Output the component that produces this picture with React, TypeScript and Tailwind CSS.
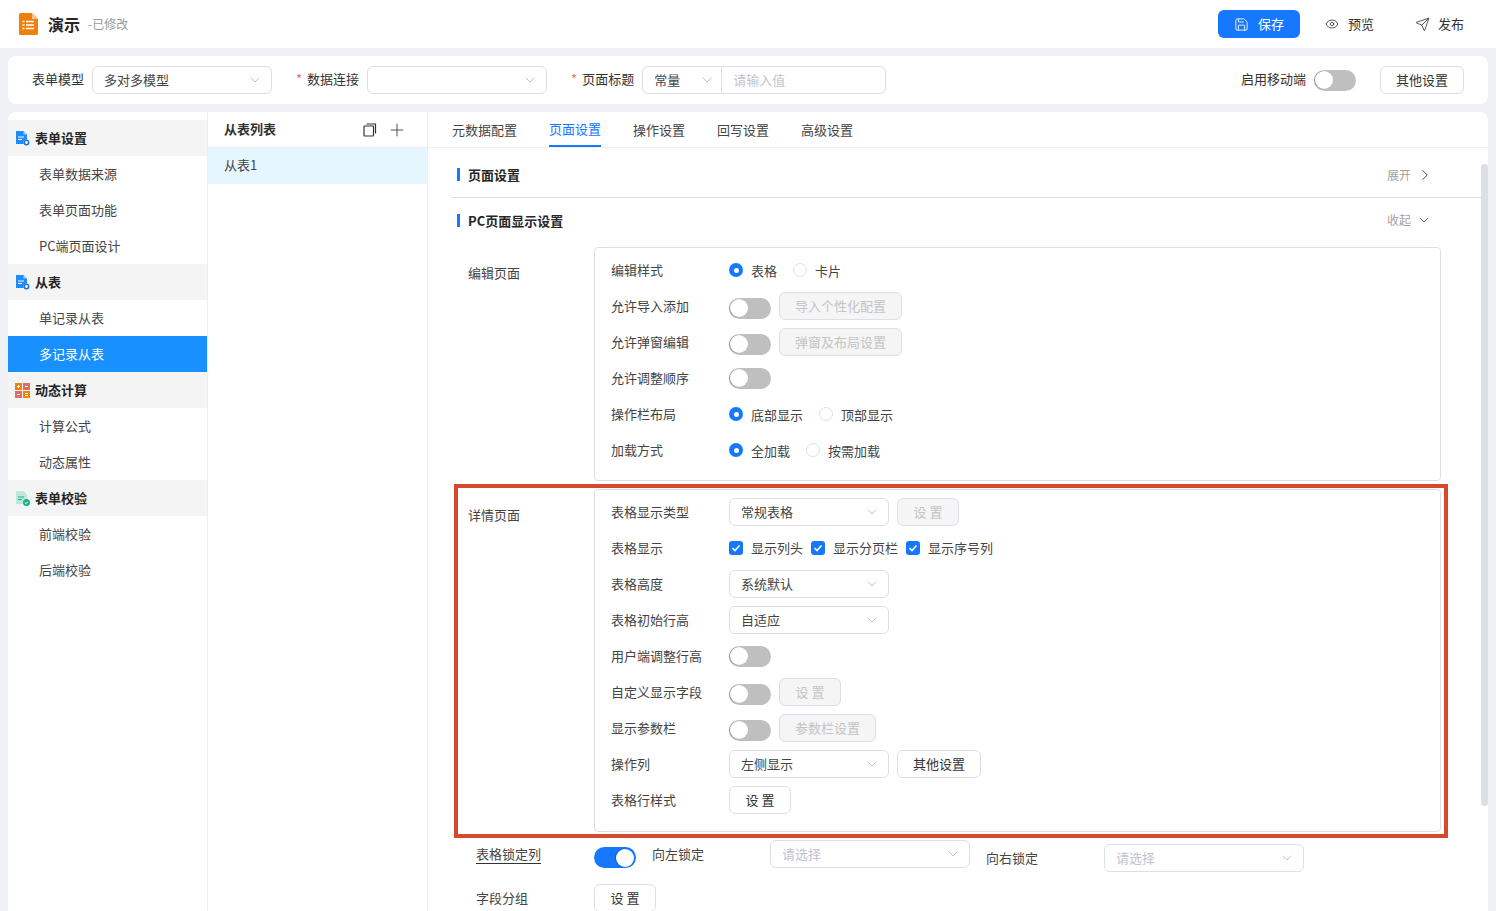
import React, {ReactNode} from 'react';
import {ChevronDown, ChevronRight, Eye, Plus, Save, Send} from 'lucide-react';

const fontStack = "font-['Noto_Sans_CJK_SC','Liberation_Sans',sans-serif]";

function DocIcon({color, badge}: {color: string; badge: string}) {
  return (
    <svg width="15" height="15" viewBox="0 0 15 15" className="shrink-0">
      <path d="M1 0h7.5L12 3.5V13H1z" fill={color} />
      <path d="M8.5 0L12 3.5H8.5z" fill="#ffffff" opacity="0.55" />
      <rect x="3" y="5.5" width="6" height="1" fill="#ffffff" />
      <rect x="3" y="8" width="4" height="1" fill="#ffffff" />
      <circle cx="11.5" cy="11.5" r="3" fill="#ffffff" />
      <circle cx="11.5" cy="11.5" r="2.2" fill="none" stroke={badge} strokeWidth="1.5" />
    </svg>
  );
}

function CalcIcon() {
  return (
    <svg width="15" height="15" viewBox="0 0 15 15" className="shrink-0">
      <rect width="7" height="7" fill="#f08300" />
      <rect x="8" width="7" height="7" fill="#de6b6b" />
      <rect y="8" width="7" height="7" fill="#de6b6b" />
      <rect x="8" y="8" width="7" height="7" fill="#f08300" />
      <path d="M2 3.5h3M3.5 2v3M10 3.5h3M2 11.5h3M10 10.5h3M10 12.5h3" stroke="#ffffff" strokeWidth="1" />
    </svg>
  );
}

function CheckDocIcon() {
  return (
    <svg width="15" height="15" viewBox="0 0 15 15" className="shrink-0">
      <path d="M1 0h7.5L12 3.5V13H1z" fill="#bfe8dd" />
      <rect x="3" y="5.5" width="6" height="1" fill="#1fae8c" />
      <rect x="3" y="8" width="4" height="1" fill="#1fae8c" />
      <circle cx="11.5" cy="11.5" r="3.5" fill="#1fae8c" />
      <path d="M9.8 11.5l1.2 1.2 2-2" fill="none" stroke="#ffffff" strokeWidth="1" />
    </svg>
  );
}

function SheetLogo() {
  return (
    <svg width="19" height="22" viewBox="0 0 19 22">
      <path d="M0 1.5A1.5 1.5 0 011.5 0H13l6 6v14.500a1.500 1.500 0 01-1.500 1.500h-16A1.500 1.500 0 010 20.500z" fill="#f07f0d" />
      <path d="M13 0l6 6h-6z" fill="#f9c48c" />
      <path d="M3.500 8.500h2M7 8.500h8M3.500 12h2M7 12h8M3.500 15.500h2M7 15.500h8" stroke="#ffffff" strokeWidth="1.500" />
    </svg>
  );
}

function CopyIcon() {
  return (
    <svg width="14" height="14" viewBox="0 0 14 14" fill="none" stroke="#333333" strokeWidth="1.200">
      <rect x="1" y="3" width="9.500" height="10" rx="0.500" />
      <path d="M3.500 1h9v9.500" />
    </svg>
  );
}

function SideGroup({icon, title, items}: {icon: ReactNode; title: string; items: string[]}) {
  return (
    <div>
      <div className="flex h-9 items-center gap-[5px] bg-[#f4f4f5] pl-[7px] text-[13px] font-bold text-[#262626]">
        {icon}
        <span className="mb-[1px]">{title}</span>
      </div>
      {items.map(item => (
        <div
          key={item}
          className={
            item === '多记录从表'
              ? 'flex h-9 items-center bg-[#1890ff] pb-[1px] pl-[31px] text-[13px] text-white'
              : 'flex h-9 items-center pb-[1px] pl-[31px] text-[13px] text-[#444444]'
          }
        >
          {item}
        </div>
      ))}
    </div>
  );
}

function Select({value, placeholder, className}: {value?: string; placeholder?: string; className?: string}) {
  return (
    <div
      className={`flex h-7 items-center justify-between rounded-md border border-[#dcdfe6] bg-white pl-[11px] pr-[8px] text-[13px] ${className ?? 'w-40'}`}
    >
      {value ? <span className="text-[#444444]">{value}</span> : <span className="text-[#c0c4cc]">{placeholder}</span>}
      <ChevronDown size={16} strokeWidth={1.100} className="text-[#a8abb2]" />
    </div>
  );
}

function Toggle({on, className}: {on?: boolean; className?: string}) {
  return (
    <div
      className={`flex h-[21px] w-[42px] shrink-0 items-center rounded-full px-[1px] ${on ? 'justify-end bg-[#1677ff] pr-[2px]' : 'bg-[#bfbfbf]'} ${className ?? ''}`}
    >
      <div className="size-[18px] rounded-full bg-white shadow-[-1px_0_1px_rgba(0,0,0,0.25)]" />
    </div>
  );
}

function Button({children, disabled, className}: {children: ReactNode; disabled?: boolean; className?: string}) {
  return (
    <div
      className={`flex h-7 items-center justify-center rounded-md border border-[#dcdfe6] px-[15px] text-[13px] ${disabled ? 'bg-[#f5f5f5] text-[#c4c4c4]' : 'bg-white text-[#333333]'} ${className ?? ''}`}
    >
      {children}
    </div>
  );
}

function Radio({label, checked}: {label: string; checked?: boolean}) {
  return (
    <div className="flex items-center gap-[8px]">
      {checked ? (
        <span className="flex size-[14px] items-center justify-center rounded-full bg-[#1677ff]">
          <span className="size-[5px] rounded-full bg-white" />
        </span>
      ) : (
        <span className="size-[14px] rounded-full border border-[#dcdfe6] bg-white" />
      )}
      <span className="mt-[2px] text-[13px] text-[#444444]">{label}</span>
    </div>
  );
}

function Check({label}: {label: string}) {
  return (
    <div className="flex items-center gap-[8px]">
      <span className="flex size-[14px] items-center justify-center rounded-[3px] bg-[#1677ff]">
        <svg width="10" height="10" viewBox="0 0 10 10" fill="none" stroke="#ffffff" strokeWidth="1.600">
          <path d="M1.500 5l2.500 2.500L8.500 2.500" />
        </svg>
      </span>
      <span className="text-[13px] text-[#444444]">{label}</span>
    </div>
  );
}

function Row({label, children}: {label: string; children?: ReactNode}) {
  return (
    <div className="flex h-9 items-center">
      <div className="w-[118px] shrink-0 text-[13px] text-[#444444]">{label}</div>
      <div className="flex items-center">{children}</div>
    </div>
  );
}

function SectionTitle({title, action, open}: {title: string; action: string; open?: boolean}) {
  return (
    <div className="mr-[31px] flex items-center justify-between">
      <div className="flex items-center gap-[8px] pl-[5px] text-[13px] font-bold text-[#262626]">
        <span className="h-[13px] w-[3px] bg-[#1677ff]" />
        {title}
      </div>
      <div className="flex items-center text-xs text-[#a3a3a3]">
        {action}
        {open ? (
          <ChevronDown size={16} strokeWidth={1.300} className="ml-[5px] mr-[25px] text-[#444444]" />
        ) : (
          <ChevronRight size={18} strokeWidth={1.300} className="ml-[5px] mr-[23px] text-[#444444]" />
        )}
      </div>
    </div>
  );
}

export default function App() {
  const tabs = ['元数据配置', '页面设置', '操作设置', '回写设置', '高级设置'];

  return (
    <div className={`flex h-[911px] flex-col overflow-hidden bg-[#f0f1f5] ${fontStack}`}>
      <header className="flex h-12 shrink-0 items-center bg-white pl-[19px] pr-8">
        <SheetLogo />
        <span className="mb-[1px] ml-[10px] text-base font-bold text-[#262626]">演示</span>
        <span className="mb-[1px] ml-2 text-xs text-[#999999]">-已修改</span>
        <div className="ml-auto flex h-7 w-[82px] items-center justify-center gap-[9px] rounded-md bg-[#1677ff] text-[13px] text-white">
          <Save size={15} strokeWidth={1.400} />
          保存
        </div>
        <div className="ml-[25px] flex items-center gap-[9px] text-[13px] text-[#333333]">
          <Eye size={14} strokeWidth={1.400} />
          预览
        </div>
        <div className="ml-[41px] flex items-center gap-2 text-[13px] text-[#333333]">
          <Send size={15} strokeWidth={1.300} />
          发布
        </div>
      </header>

      <div className="mx-2 mt-2 flex h-12 shrink-0 items-center rounded-lg bg-white pl-6 pr-6 text-[13px] text-[#333333]">
        <span className="mb-[2px] mr-2">表单模型</span>
        <Select value="多对多模型" className="w-[180px]" />
        <span className="mb-[2px] ml-6 mr-2">
          <span className="mr-[5px] text-[#f56c6c]">*</span>数据连接
        </span>
        <Select className="w-[180px]" />
        <span className="mb-[2px] ml-6 mr-2">
          <span className="mr-[5px] text-[#f56c6c]">*</span>页面标题
        </span>
        <div className="flex h-7 w-[244px] items-center rounded-md border border-[#dcdfe6] text-[13px]">
          <div className="flex h-full w-[79px] items-center justify-between border-r border-[#dcdfe6] pl-[11px] pr-[6px]">
            <span className="text-[#444444]">常量</span>
            <ChevronDown size={16} strokeWidth={1.100} className="text-[#a8abb2]" />
          </div>
          <span className="pl-[11px] text-[#c0c4cc]">请输入值</span>
        </div>
        <span className="mb-[2px] ml-auto mr-2">启用移动端</span>
        <Toggle />
        <Button className="ml-6 w-[84px] !px-0">其他设置</Button>
      </div>

      <main className="mx-2 mt-2 flex min-h-0 flex-1 overflow-hidden rounded-t-lg bg-white">
        <aside className="w-[200px] shrink-0 border-r border-[#eeeeee] pt-2">
          <SideGroup
            icon={<DocIcon color="#1f8bff" badge="#1f6fd0" />}
            title="表单设置"
            items={['表单数据来源', '表单页面功能', 'PC端页面设计']}
          />
          <SideGroup
            icon={<DocIcon color="#1f8bff" badge="#1f6fd0" />}
            title="从表"
            items={['单记录从表', '多记录从表']}
          />
          <SideGroup icon={<CalcIcon />} title="动态计算" items={['计算公式', '动态属性']} />
          <SideGroup icon={<CheckDocIcon />} title="表单校验" items={['前端校验', '后端校验']} />
        </aside>

        <section className="w-[220px] shrink-0 border-r border-[#eeeeee]">
          <div className="flex h-9 items-center justify-between border-b border-[#eeeeee] pl-4 pr-[23px]">
            <span className="mb-[2px] text-[13px] font-bold text-[#333333]">从表列表</span>
            <div className="flex items-center gap-[10px]">
              <CopyIcon />
              <Plus size={20} strokeWidth={1.100} className="-mr-[3px] text-[#444444]" />
            </div>
          </div>
          <div className="flex h-9 items-center bg-[#e6f6ff] pb-[2px] pl-4 text-[13px] text-[#444444]">从表1</div>
        </section>

        <section className="relative min-w-0 flex-1">
          <nav className="flex h-9 items-stretch gap-8 border-b border-[#eeeeee] pl-6 text-[13px] text-[#444444]">
            {tabs.map(tab => (
              <div
                key={tab}
                className={
                  tab === '页面设置'
                    ? 'flex items-center border-b-2 border-[#1677ff] text-[#1677ff]'
                    : 'flex items-center'
                }
              >
                {tab}
              </div>
            ))}
          </nav>

          <div className="absolute right-0 top-[52px] h-[642px] w-[7px] rounded-full bg-[#dcdfe6]" />

          <div className="pl-6">
            <div className="border-b border-[#dcdfe6] pb-[12px] pt-[17px]">
              <SectionTitle title="页面设置" action="展开" />
            </div>
            <div className="pt-[13px]">
              <SectionTitle title="PC页面显示设置" action="收起" open />
            </div>

            <div className="mt-[17px] flex">
              <div className="w-[142px] shrink-0 pl-4 pt-[16px] text-[13px] text-[#444444]">编辑页面</div>
              <div className="h-[234px] w-[847px] rounded-[4px] border border-[#dcdfe6] pl-4 pt-[4px]">
                <Row label="编辑样式">
                  <Radio label="表格" checked />
                  <div className="ml-4">
                    <Radio label="卡片" />
                  </div>
                </Row>
                <Row label="允许导入添加">
                  <Toggle className="mt-[4px]" />
                  <Button disabled className="ml-2 w-[123px]">导入个性化配置</Button>
                </Row>
                <Row label="允许弹窗编辑">
                  <Toggle className="mt-[4px]" />
                  <Button disabled className="ml-2 w-[123px]">弹窗及布局设置</Button>
                </Row>
                <Row label="允许调整顺序">
                  <Toggle />
                </Row>
                <Row label="操作栏布局">
                  <Radio label="底部显示" checked />
                  <div className="ml-4">
                    <Radio label="顶部显示" />
                  </div>
                </Row>
                <Row label="加载方式">
                  <Radio label="全加载" checked />
                  <div className="ml-4">
                    <Radio label="按需加载" />
                  </div>
                </Row>
              </div>
            </div>

            <div className="relative mt-2 flex">
              <div className="pointer-events-none absolute left-[2px] top-[-5px] h-[354px] w-[994px] border-4 border-[#d54a2f]" />
              <div className="w-[142px] shrink-0 pl-4 pt-[16px] text-[13px] text-[#444444]">详情页面</div>
              <div className="h-[343px] w-[847px] rounded-[4px] border border-[#dcdfe6] pl-4 pt-[4px]">
                <Row label="表格显示类型">
                  <Select value="常规表格" />
                  <Button disabled className="ml-2 w-[62px] !px-0">设 置</Button>
                </Row>
                <Row label="表格显示">
                  <Check label="显示列头" />
                  <div className="ml-2">
                    <Check label="显示分页栏" />
                  </div>
                  <div className="ml-2">
                    <Check label="显示序号列" />
                  </div>
                </Row>
                <Row label="表格高度">
                  <Select value="系统默认" />
                </Row>
                <Row label="表格初始行高">
                  <Select value="自适应" />
                </Row>
                <Row label="用户端调整行高">
                  <Toggle />
                </Row>
                <Row label="自定义显示字段">
                  <Toggle className="mt-[4px]" />
                  <Button disabled className="ml-2 w-[62px] !px-0">设 置</Button>
                </Row>
                <Row label="显示参数栏">
                  <Toggle className="mt-[4px]" />
                  <Button disabled className="ml-2 w-[97px] !px-0">参数栏设置</Button>
                </Row>
                <Row label="操作列">
                  <Select value="左侧显示" />
                  <Button className="ml-2 w-[84px] !px-0">其他设置</Button>
                </Row>
                <Row label="表格行样式">
                  <Button className="w-[62px] !px-0">设 置</Button>
                </Row>
              </div>
            </div>

            <div className="mt-2 flex h-9 items-start text-[13px] text-[#444444]">
              <span className="ml-6 mt-[4px] w-[118px] shrink-0">
                <span className="border-b border-[#333333]">表格锁定列</span>
              </span>
              <Toggle on className="mt-[7px]" />
              <span className="ml-4 mt-[4px] w-[118px] shrink-0">向左锁定</span>
              <Select placeholder="请选择" className="w-[200px]" />
              <span className="ml-4 mt-[8px] w-[118px] shrink-0">向右锁定</span>
              <Select placeholder="请选择" className="mt-[4px] w-[200px]" />
            </div>
            <div className="mt-2 flex items-center text-[13px] text-[#444444]">
              <span className="ml-6 w-[118px] shrink-0">字段分组</span>
              <Button className="w-[62px] !px-0">设 置</Button>
            </div>
          </div>
        </section>
      </main>
    </div>
  );
}
